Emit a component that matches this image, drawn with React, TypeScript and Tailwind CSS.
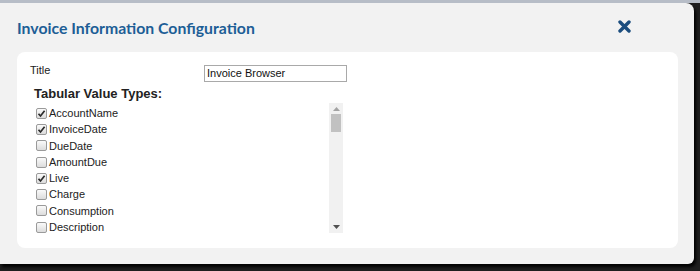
import React from "react";

const items: { name: string; checked: boolean }[] = [
	{ name: "AccountName", checked: true },
	{ name: "InvoiceDate", checked: true },
	{ name: "DueDate", checked: false },
	{ name: "AmountDue", checked: false },
	{ name: "Live", checked: true },
	{ name: "Charge", checked: false },
	{ name: "Consumption", checked: false },
	{ name: "Description", checked: false }
];

function Box(props: { checked: boolean }) {
	return (
		<span className="w-[11px] h-[11px] rounded-[2px] border border-[#9a9a9a] bg-gradient-to-b from-[#fafafa] to-[#dcdcdc] flex items-center justify-center shrink-0">
			{props.checked ? (
				<svg width="9" height="9" viewBox="0 0 9 9">
					<path d="M1.5 4.8 L3.5 7 L7.6 1.8" fill="none" stroke="#2b2b2b" strokeWidth="1.7" />
				</svg>
			) : null}
		</span>
	);
}

export default function App() {
	return (
		<div className="w-[700px] h-[271px] bg-[#1e1e1e] flex flex-col overflow-hidden" style={{ fontFamily: "Arial, 'Liberation Sans', sans-serif" }}>
			<div className="h-[3px] bg-[#b7bdc7] shrink-0"></div>
			<div className="flex flex-row">
				<div className="w-[694px] h-[261px] bg-[#f2f2f2] rounded-tr-[8px] rounded-br-[6px] shadow-[2px_3px_3px_rgba(0,0,0,0.9)] flex flex-col">
					<div className="flex flex-row items-center justify-between pl-[17px] pr-[63px] h-[49px]">
						<span className="text-[15.8px] text-[#1d5e96] font-bold" style={{ fontFamily: "Lato, sans-serif" }}>
							Invoice Information Configuration
						</span>
						<svg width="13" height="13" viewBox="0 0 13 13" className="mt-[-2px]">
							<path d="M2 2 L11 11 M11 2 L2 11" stroke="#1b4d7e" strokeWidth="3.4" strokeLinecap="round" />
						</svg>
					</div>
					<div className="ml-[17px] w-[661px] h-[196px] bg-white rounded-[8px] pl-[13px] pt-[12px]">
						<div className="flex flex-row items-start">
							<span className="w-[174px] text-[11px] text-[#222] leading-[13px]">Title</span>
							<div className="w-[143px] h-[17px] border border-[#a9a9a9] px-[2px] text-[11px] leading-[15px] text-[#111] mt-[1px]">
								Invoice Browser
							</div>
						</div>
						<div className="pl-[4px] text-[13px] font-bold text-[#222] leading-[16px] mt-[4px]">Tabular Value Types:</div>
						<div className="flex flex-row mt-[1px] pl-[6px]">
							<div className="w-[293px] flex flex-col pt-[2px]">
								{items.map((it) => (
									<div key={it.name} className="flex flex-row items-center gap-[2px] h-[16.3px] text-[11px] text-[#222]">
										<Box checked={it.checked} />
										<span>{it.name}</span>
									</div>
								))}
							</div>
							<div className="w-[14px] h-[130px] bg-[#f1f1f1] flex flex-col items-center justify-between py-[4px]">
								<div className="flex flex-col items-center gap-[3px]">
									<svg width="7" height="4" viewBox="0 0 7 4"><path d="M3.5 0 L7 4 L0 4 Z" fill="#a3a3a3" /></svg>
									<div className="w-[10px] h-[18px] bg-[#c1c1c1]"></div>
								</div>
								<svg width="7" height="4" viewBox="0 0 7 4"><path d="M0 0 L7 0 L3.5 4 Z" fill="#505050" /></svg>
							</div>
						</div>
					</div>
				</div>
				<div className="flex-1"></div>
			</div>
		</div>
	);
}
